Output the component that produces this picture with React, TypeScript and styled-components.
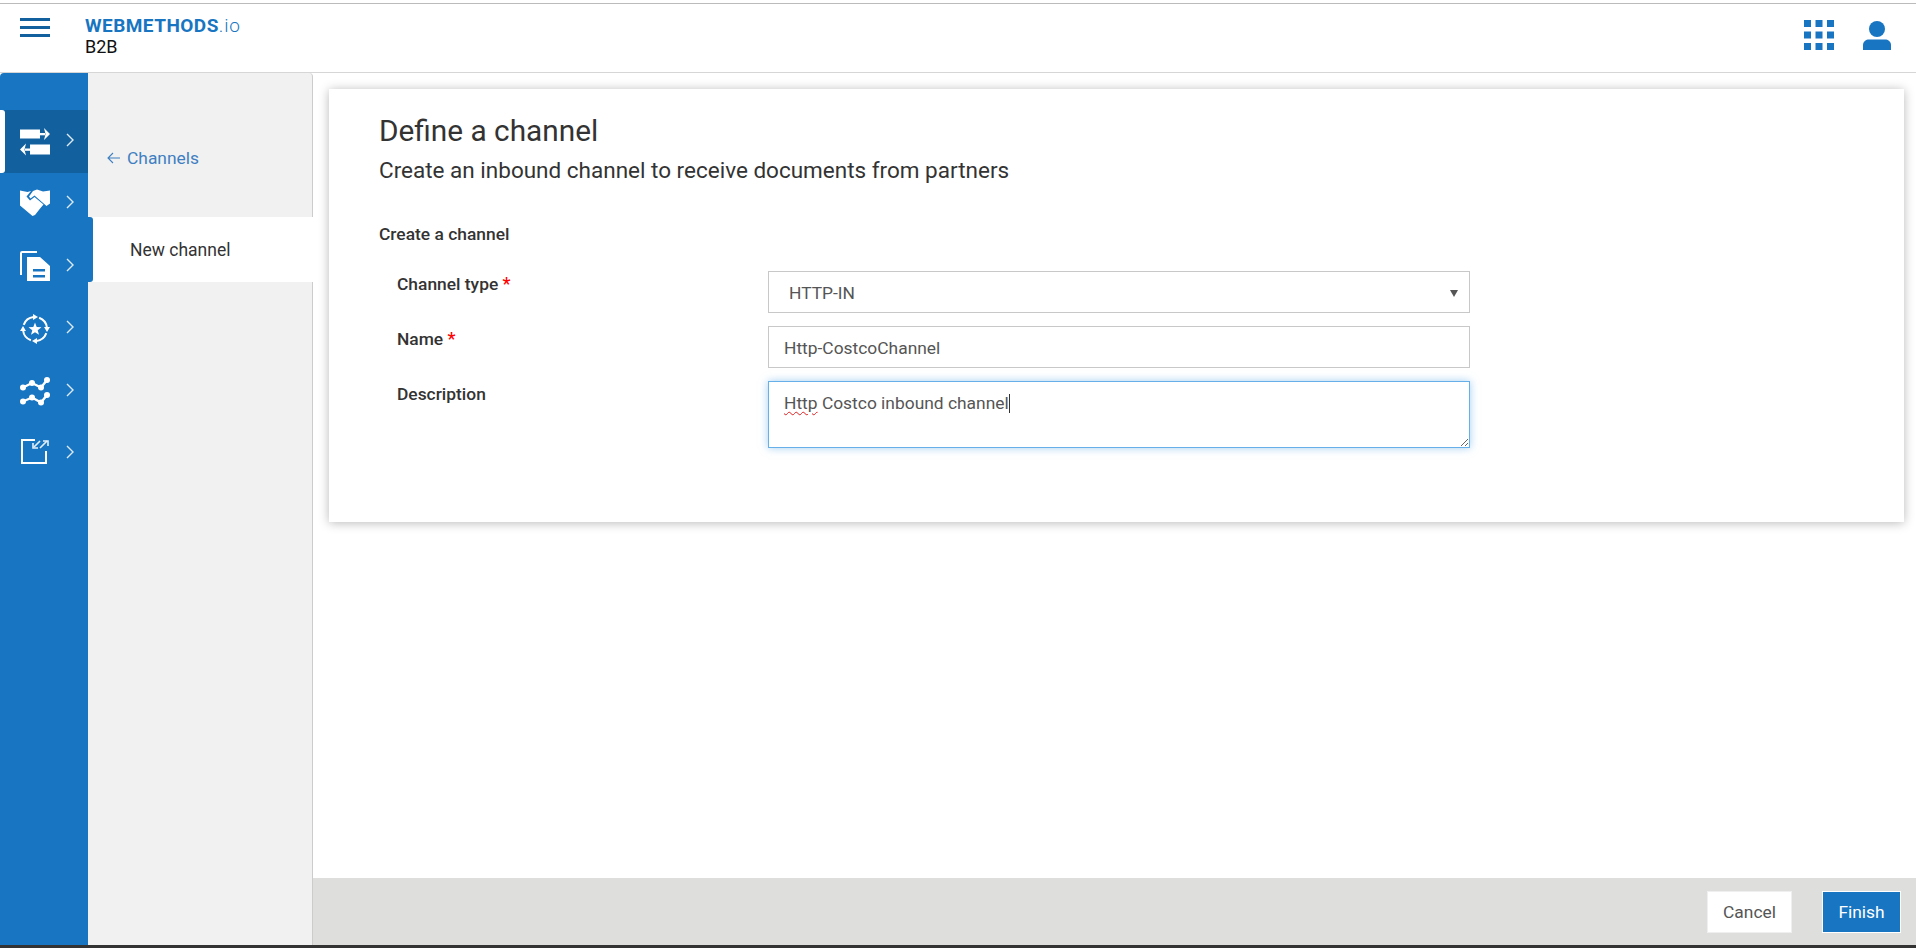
import React from "react";
import styled, { createGlobalStyle } from "styled-components";

const Global = createGlobalStyle`
  html, body { margin: 0; padding: 0; height: 100%; background: #fff; }
  body { font-family: Roboto, "Liberation Sans", sans-serif; overflow: hidden; }
  * { box-sizing: border-box; }
`;

const Page = styled.div`
  width: 1916px;
  height: 948px;
  display: flex;
  flex-direction: column;
  background: #fff;
`;

const Header = styled.header`
  height: 70px;
  margin-top: 3px;
  flex: none;
  display: flex;
  align-items: flex-start;
  border-top: 1px solid #bbbbbb;
  border-bottom: 1px solid #d6d6d6;
  padding-right: 25px;
`;

const Burger = styled.div`
  width: 30px;
  margin: 14px 0 0 20px;
  display: flex;
  flex-direction: column;
  gap: 5px;
  span {
    height: 3px;
    background: #13609f;
    display: block;
  }
`;

const Brand = styled.div`
  margin: 11px 0 0 35px;
  display: flex;
  flex-direction: column;
`;

const Logo = styled.div`
  font-size: 19px;
  line-height: 21px;
  font-weight: 700;
  color: #1875c1;
  letter-spacing: 0.45px;
  span {
    font-weight: 300;
    letter-spacing: 0.8px;
  }
`;

const Product = styled.div`
  font-size: 18px;
  line-height: 21px;
  color: #111;
`;

const HeaderIcons = styled.div`
  margin: 16px 0 0 auto;
  display: flex;
  gap: 29px;
  align-items: flex-start;
  svg { display: block; }
`;

const Body = styled.div`
  flex: 1;
  min-height: 0;
  display: flex;
`;

const Sidebar = styled.nav`
  width: 88px;
  flex: none;
  background: #1875c1;
  border-top-left-radius: 4px;
  padding-top: 37px;
  display: flex;
  flex-direction: column;
`;

const NavItem = styled.div<{ $active?: boolean }>`
  position: relative;
  height: 62.5px;
  flex: none;
  display: flex;
  align-items: center;
  padding-left: 20px;
  gap: 16px;
  background: ${(p) => (p.$active ? "#13609f" : "transparent")};
  svg { display: block; flex: none; }
  &::before {
    content: "";
    display: ${(p) => (p.$active ? "block" : "none")};
    position: absolute;
    left: 0;
    top: 0;
    bottom: 0;
    width: 5px;
    background: #fff;
    border-radius: 0 3px 3px 0;
  }
`;

const Chevron = styled.svg`
  margin-top: -3px;
`;

const SubNav = styled.aside`
  width: 225px;
  flex: none;
  background: #f1f1f1;
  border-right: 1px solid #cccccc;
  border-top-right-radius: 4px;
  display: flex;
  flex-direction: column;
`;

const BackLink = styled.div`
  height: 144px;
  padding: 25px 0 0 19px;
  display: flex;
  align-items: center;
  gap: 7px;
  color: #3f7fc1;
  font-size: 17.4px;
  svg { display: block; flex: none; }
`;

const SubItem = styled.div`
  position: relative;
  height: 65px;
  width: 225px;
  background: #fff;
  display: flex;
  align-items: center;
  padding-left: 42px;
  font-size: 17.5px;
  color: #333;
  &::before {
    content: "";
    position: absolute;
    left: 0;
    top: 0;
    bottom: 0;
    width: 5px;
    background: #1875c1;
    border-radius: 0 3px 3px 0;
  }
`;

const Main = styled.main`
  flex: 1;
  min-width: 0;
  display: flex;
  flex-direction: column;
`;

const Content = styled.div`
  flex: 1;
  padding: 16px 12px 0 16px;
`;

const Card = styled.section`
  height: 433px;
  background: #fff;
  box-shadow: 0 1px 10px rgba(0, 0, 0, 0.28);
  padding: 24px 0 0 50px;
`;

const Title = styled.h1`
  margin: 0;
  font-size: 29.8px;
  line-height: 36px;
  font-weight: 400;
  color: #333;
`;

const Subtitle = styled.p`
  margin: 8px 0 0;
  font-size: 22.5px;
  line-height: 26px;
  color: #333;
`;

const Section = styled.h2`
  margin: 41px 0 0;
  font-size: 17.4px;
  line-height: 20px;
  font-weight: 500;
  color: #333;
`;

const Form = styled.div`
  margin: 27px 0 0 18px;
  display: grid;
  grid-template-columns: 371px 702px;
  row-gap: 13px;
`;

const Label = styled.label`
  font-size: 17.4px;
  line-height: 20px;
  font-weight: 500;
  color: #333;
  padding-top: 3px;
  span {
    color: #f00;
    font-size: 18px;
  }
`;

const SelectBox = styled.div`
  height: 42px;
  border: 1px solid #c8c8c8;
  background: #fff;
  display: flex;
  align-items: center;
  justify-content: space-between;
  padding: 1px 11px 0 20px;
  font-size: 17.4px;
  color: #555;
  svg { display: block; }
`;

const TextInput = styled.input`
  height: 42px;
  width: 100%;
  border: 1px solid #c8c8c8;
  padding: 1px 15px 0;
  font: 17.4px Roboto, "Liberation Sans", sans-serif;
  color: #555;
  outline: none;
  background: #fff;
`;

const TextArea = styled.div`
  height: 67px;
  border: 1px solid #66afe9;
  box-shadow: 0 0 8px rgba(102, 175, 233, 0.6);
  padding: 11px 15px 0;
  font-size: 17.4px;
  line-height: 20px;
  color: #555;
  background: #fff;
  overflow: auto;
  resize: vertical;
`;

const Misspelled = styled.span`
  text-decoration: underline wavy #e02020 1px;
  text-underline-offset: 2px;
`;

const Caret = styled.span`
  display: inline-block;
  width: 1px;
  height: 19px;
  background: #333;
  vertical-align: -4px;
`;

const Footer = styled.footer`
  height: 67px;
  flex: none;
  background: #dededc;
  display: flex;
  align-items: flex-start;
  justify-content: flex-end;
  gap: 30px;
  padding: 13px 15px 0 0;
`;

const Button = styled.button<{ $primary?: boolean }>`
  height: 42px;
  width: ${(p) => (p.$primary ? "79px" : "85px")};
  border: 1px solid ${(p) => (p.$primary ? "#fff" : "#efefef")};
  background: ${(p) => (p.$primary ? "#1875c1" : "#fff")};
  color: ${(p) => (p.$primary ? "#fff" : "#555")};
  font: 17.4px Roboto, "Liberation Sans", sans-serif;
  padding: 0;
`;

const BottomStrip = styled.div`
  height: 3px;
  flex: none;
  background: #333333;
`;

const Chev = () => (
  <Chevron width="8" height="14" viewBox="0 0 8 14" fill="none" stroke="#dcebf7" strokeWidth="1.4">
    <path d="M1 1l6 6-6 6" />
  </Chevron>
);

const Transfer = () => (
  <svg width="30" height="30" viewBox="0 0 30 30" fill="#fff">
    <rect x="0" y="3.500" width="20" height="9" />
    <rect x="20" y="7" width="5" height="2.300" />
    <path d="M24 2l6 6-6 6 1.500-6z" />
    <rect x="10" y="18.500" width="20" height="10" />
    <rect x="5" y="22.500" width="5" height="2.300" />
    <path d="M6 17.500l-6 6 6 6-1.500-6z" />
  </svg>
);

const Handshake = () => (
  <svg width="30" height="30" viewBox="0 0 30 30" fill="#fff">
    <path d="M0 1.500l7.500 1.500L11 2 6.500 7.500 10 11.500l4.500-3.500 9 7.500-3 3.500-5.500 7-2.500 1L0 16.500z" />
    <path d="M13 2l4-1.500 6 2L30 1.500v13l-3.500 2.500-12-10.500-4 3-1.500-2z" />
  </svg>
);

const Docs = () => (
  <svg width="30" height="30" viewBox="0 0 30 30" fill="none">
    <path d="M1 24V2.200A1.200 1.200 0 0 1 2.200 1H17" stroke="#fff" strokeWidth="2" />
    <path
      fillRule="evenodd"
      fill="#fff"
      d="M7 6h13l10 9v15H7zm6 12v2.500h12V18zm0 6v2.500h12V24z"
    />
  </svg>
);

const StarCycle = () => (
  <svg width="30" height="30" viewBox="0 0 30 30" fill="none">
    {[0, 90, 180, 270].map((angle) => (
      <g key={angle} transform={`rotate(${angle} 15 15)`}>
        <path d="M3.700 10.900A12 12 0 0 1 13.500 3.100" stroke="#fff" strokeWidth="2" />
        <path d="M13 0l5 3-5 3z" fill="#fff" />
      </g>
    ))}
    <path
      fill="#fff"
      d="M15 8.500l1.700 4.500 4.800.2-3.800 3 1.300 4.600-4-2.600-4 2.600 1.300-4.600-3.800-3 4.800-.2z"
    />
  </svg>
);

const Trend = () => (
  <svg width="30" height="30" viewBox="0 0 30 30" fill="#fff" stroke="#fff">
    <path d="M3 11.500l9-4.500 9 4.500 6-7.500" fill="none" strokeWidth="2.400" />
    <path d="M3 25.500l9-4 9 5 6-7.500" fill="none" strokeWidth="2.400" />
    <g stroke="none">
      <circle cx="3" cy="11.500" r="3" />
      <circle cx="12" cy="7" r="3" />
      <circle cx="21" cy="11.500" r="3" />
      <circle cx="27" cy="4" r="3" />
      <circle cx="3" cy="25.500" r="3" />
      <circle cx="12" cy="21.500" r="3" />
      <circle cx="21" cy="26.500" r="3" />
      <circle cx="27" cy="19" r="3" />
    </g>
  </svg>
);

const LaunchIcon = styled.svg`
  margin-top: -6px;
`;

const Launch = () => (
  <LaunchIcon width="30" height="30" viewBox="0 0 30 30" fill="none">
    <path d="M15 4H2v23h24V15" stroke="#fff" strokeWidth="2" />
    <path d="M14 11l6-6M20 12l7-7" stroke="#e3eff9" strokeWidth="1.600" />
    <path d="M13 7v5h5M23 5h5v5" stroke="#e3eff9" strokeWidth="1.600" />
  </LaunchIcon>
);

const AppGrid = () => (
  <svg width="30" height="30" viewBox="0 0 30 30" fill="#1875c1">
    {[0, 11.5, 23].map((y) =>
      [0, 11.5, 23].map((x) => <rect key={`${x}-${y}`} x={x} y={y} width="7" height="7" />)
    )}
  </svg>
);

const UserIcon = () => (
  <svg width="28" height="30" viewBox="0 0 28 30" fill="#1875c1">
    <circle cx="14" cy="9" r="8" />
    <path d="M0 31v-6c0-3.500 3-5.500 6-5.500h16c3 0 6 2 6 5.500v6z" />
  </svg>
);

export default function App() {
  return (
    <Page>
      <Global />
      <Header>
        <Burger>
          <span />
          <span />
          <span />
        </Burger>
        <Brand>
          <Logo>
            WEBMETHODS<span>.io</span>
          </Logo>
          <Product>B2B</Product>
        </Brand>
        <HeaderIcons>
          <AppGrid />
          <UserIcon />
        </HeaderIcons>
      </Header>
      <Body>
        <Sidebar>
          <NavItem $active>
            <Transfer />
            <Chev />
          </NavItem>
          <NavItem>
            <Handshake />
            <Chev />
          </NavItem>
          <NavItem>
            <Docs />
            <Chev />
          </NavItem>
          <NavItem>
            <StarCycle />
            <Chev />
          </NavItem>
          <NavItem>
            <Trend />
            <Chev />
          </NavItem>
          <NavItem>
            <Launch />
            <Chev />
          </NavItem>
        </Sidebar>
        <SubNav>
          <BackLink>
            <svg width="13" height="12" viewBox="0 0 13 12" fill="none" stroke="#3f7fc1" strokeWidth="1.1">
              <path d="M13 6H1M6 1L1 6l5 5" />
            </svg>
            Channels
          </BackLink>
          <SubItem>New channel</SubItem>
        </SubNav>
        <Main>
          <Content>
            <Card>
              <Title>Define a channel</Title>
              <Subtitle>Create an inbound channel to receive documents from partners</Subtitle>
              <Section>Create a channel</Section>
              <Form>
                <Label>
                  Channel type <span>*</span>
                </Label>
                <SelectBox>
                  HTTP-IN
                  <svg width="8" height="8" viewBox="0 0 8 8" fill="#555">
                    <path d="M0 1h8L4 8z" />
                  </svg>
                </SelectBox>
                <Label>
                  Name <span>*</span>
                </Label>
                <TextInput value="Http-CostcoChannel" readOnly />
                <Label>Description</Label>
                <TextArea>
                  <Misspelled>Http</Misspelled> Costco inbound channel
                  <Caret />
                </TextArea>
              </Form>
            </Card>
          </Content>
          <Footer>
            <Button>Cancel</Button>
            <Button $primary>Finish</Button>
          </Footer>
        </Main>
      </Body>
      <BottomStrip />
    </Page>
  );
}
